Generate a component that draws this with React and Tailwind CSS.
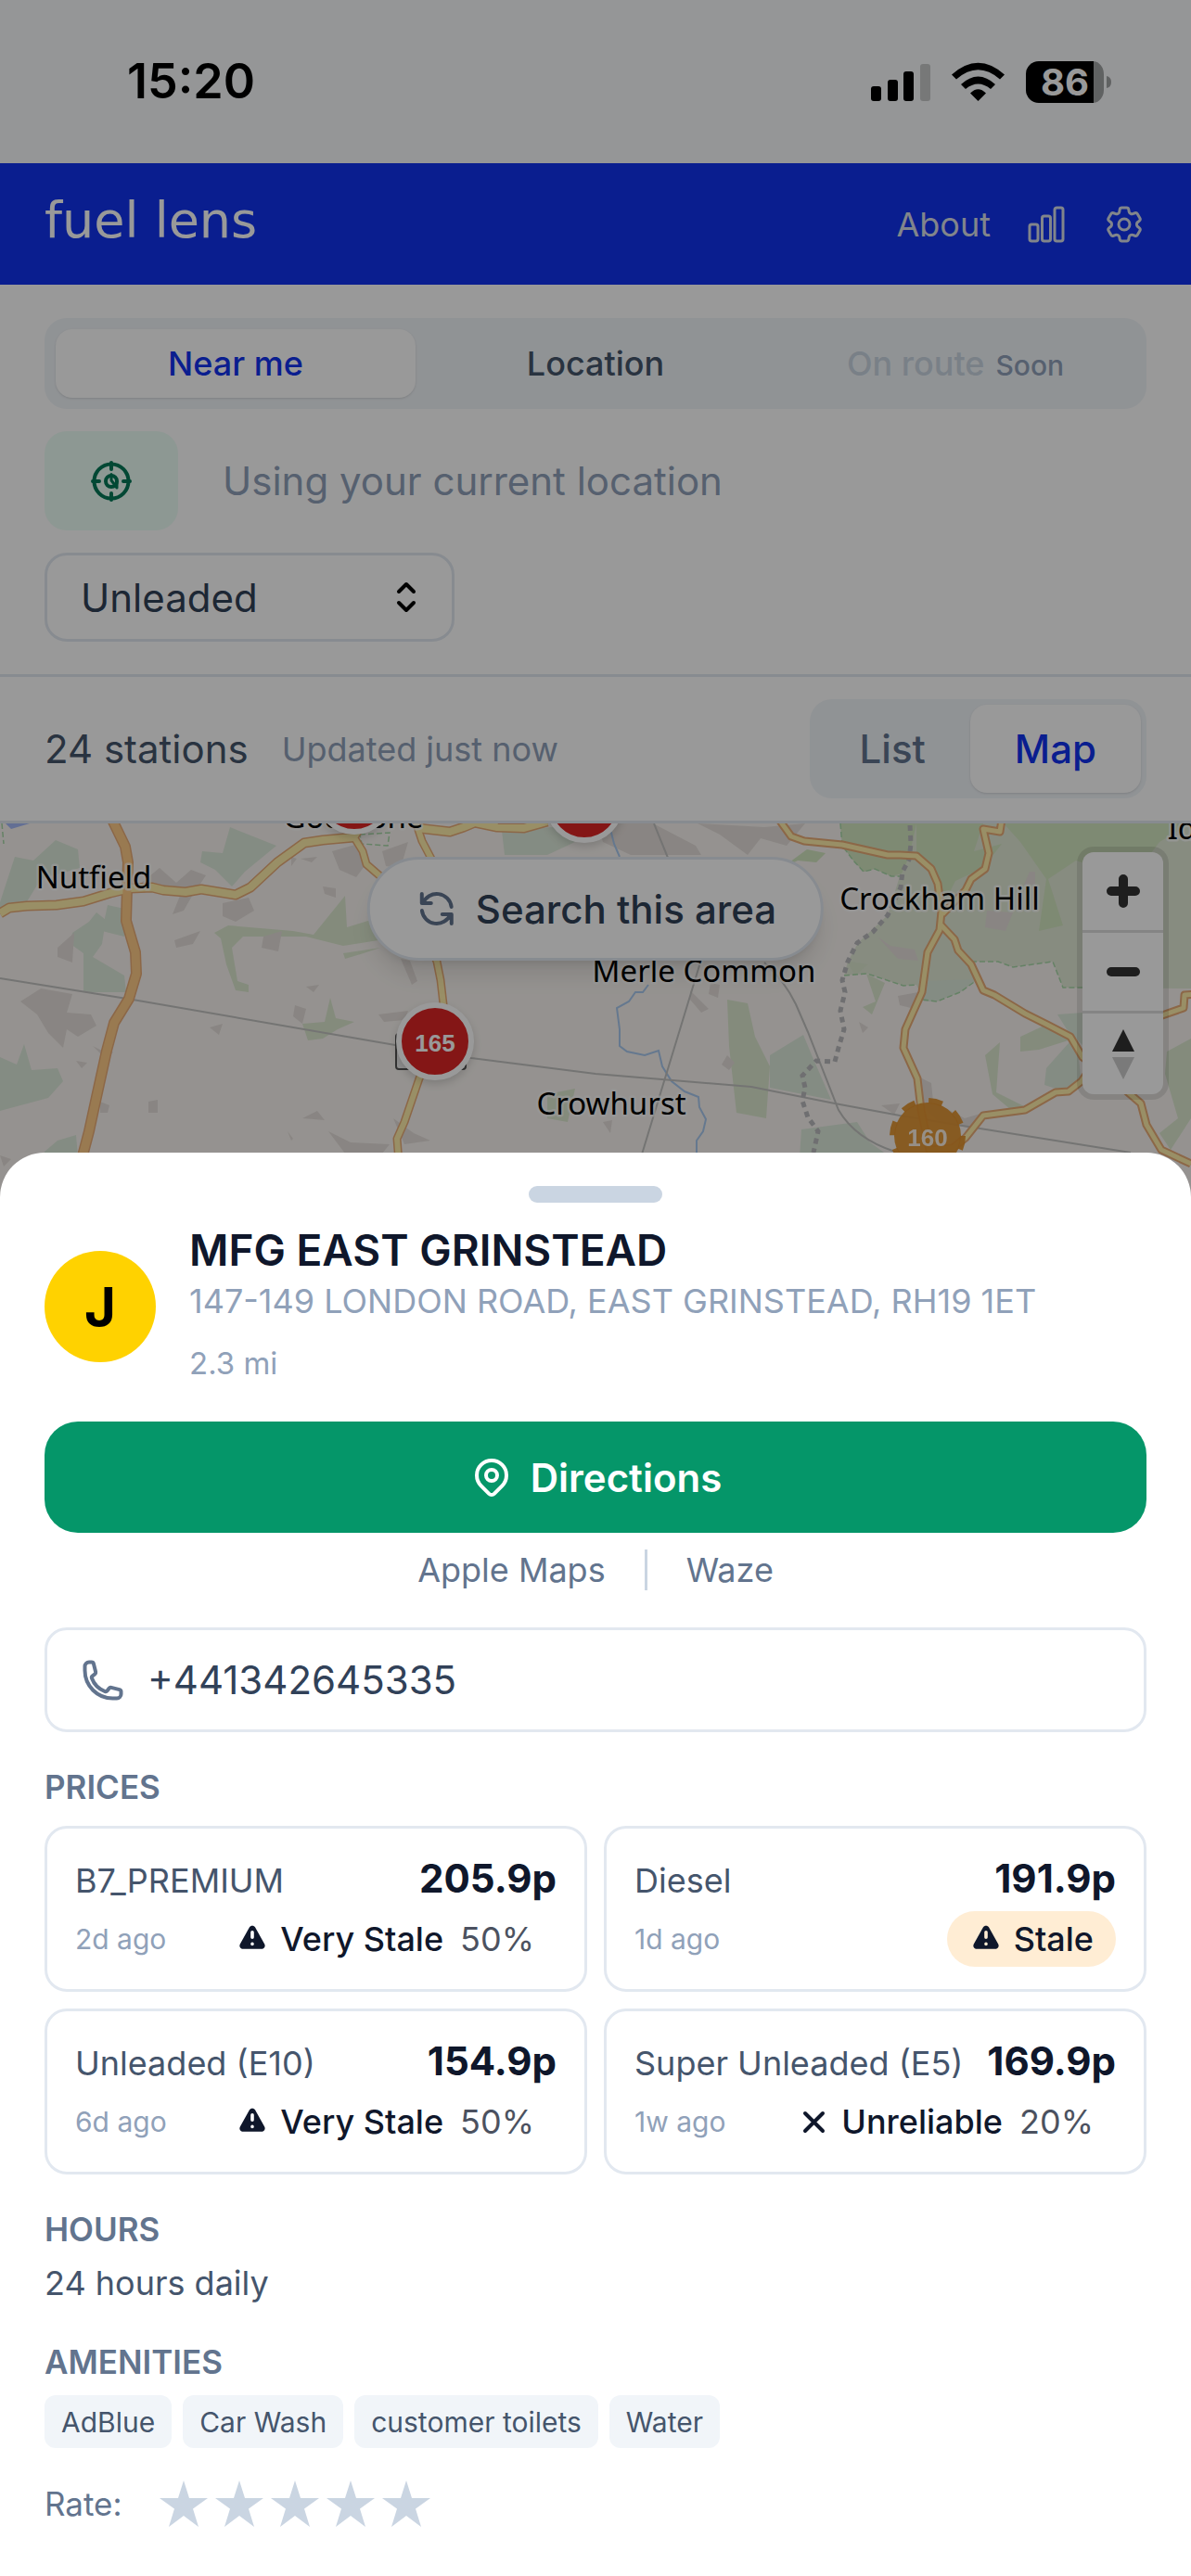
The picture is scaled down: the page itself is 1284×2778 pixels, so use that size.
import React from "react";
import {
  HiOutlineLocationMarker,
  HiOutlineRefresh,
  HiOutlineSelector,
  HiExclamation,
} from "react-icons/hi";
import {
  HiOutlineChartBar,
  HiOutlineCog6Tooth,
  HiOutlinePhone,
} from "react-icons/hi2";

function StatusIcons() {
  return (
    <svg width="260" height="54" viewBox="0 -4 260 54" aria-hidden="true">
      <rect x="0" y="28" width="11" height="16" rx="3" />
      <rect x="18" y="21" width="11" height="23" rx="3" />
      <rect x="35" y="12" width="11" height="32" rx="3" />
      <rect x="53" y="4" width="11" height="40" rx="3" opacity="0.2" />
      <path d="M87 15.5 Q115.500 -10 144 15.500 L139 20.500 Q115.500 0 92 20.500 Z" />
      <path d="M97 26 Q115.500 9 134 26 L129 31 Q115.500 20 102 31 Z" />
      <path d="M107 35.500 Q115.500 27 124 35.500 L115.500 44 Z" />
      <path d="M181 1 H240 V46 H181 A14 14 0 0 1 167 32 V15 A14 14 0 0 1 181 1 Z" />
      <path d="M240 1 A12 14 0 0 1 251 15 V32 A12 14 0 0 1 240 46 Z" opacity="0.35" />
      <path d="M254 17 Q259 18 259 23.500 Q259 29 254 30 Z" opacity="0.35" />
      <text x="209" y="38" textAnchor="middle" fill="#ffffff" className="font-['Inter',sans-serif] text-[40px] font-bold">
        86
      </text>
    </svg>
  );
}

function CrosshairIcon() {
  return (
    <svg width="48" height="48" viewBox="0 0 48 48" fill="none" stroke="#047857" strokeWidth="4" strokeLinecap="round" strokeLinejoin="round" aria-hidden="true">
      <circle cx="24" cy="24" r="18.500" />
      <path d="M24 4 V11 M24 37 V44 M4 24 H11 M37 24 H44" />
      <circle cx="24" cy="24" r="6" />
      <path d="M24 16.500 V23 L30 31 M30 24 V31" strokeWidth="3" />
    </svg>
  );
}

const yellowRoads = [
  "M0 97 L10 91 L29 89 L61 88 L90 84 L119 75 L140 70 L164 69 L176 72 L200 74 L217 71 L254 77 L270 69 L299 42 L328 21 L348 18 L381 15 L388 4",
  "M450 5 L485 9 L500 4 L512 -1 L536 4 L565 5 L590 -2",
];
const minorYellow = [
  "M383 17 L391 30 L395 44 L410 57 L450 100 L471 149 L475 169 L478 195 L469 235 L452 275 L436 322 L428 340 L430 365",
  "M448 -2 L455 19 L465 38",
];
const amberRoads = [
  "M840 -4 L853 14 L867 19 L908 23 L957 34 L970 34 L988 35 L1004 49 L1011 65 L1015 95 L1013 115 L1000 139 L994 182 L976 222 L974 242 L989 275 L993 309 L1002 352 L1027 350 L1041 339 L1060 315 L1105 309 L1138 290 L1152 289 L1166 278 L1182 255",
  "M1013 108 L1029 125 L1033 137 L1047 152 L1060 180 L1072 185 L1105 205 L1129 217 L1154 230 L1167 252 L1215 289 L1230 302 L1236 325 L1252 352 L1284 367",
  "M1080 -4 L1078 9 L1060 6 L1066 32 L1062 49 L1047 60 L1041 72 L1016 98",
  "M1250 208 L1276 199 L1277 185 L1290 184",
];
const trunk =
  "M121 -4 L135 25 L138 42 L137 69 L136 105 L146 139 L147 162 L139 189 L123 215 L115 245 L104 295 L96 332 L86 370";

const labels = [
  ["Nutfield", 101, 70],
  ["Godstone", 381, 5],
  ["Crockham Hill", 1013, 93],
  ["Merle Common", 759, 171],
  ["Crowhurst", 659, 314],
  ["Ide Hill", 1313, 17],
];

function MapDrawing() {
  return (
    <svg className="block h-auto w-full" viewBox="0 0 1284 440" fill="none" aria-hidden="true">
      <g fill="#e1e9d6">
        <path d="M906 0 L908 24 L920 40 L931 52 L943 49 L961 57 L970 57 L957 99 L925 129 L914 149 L910 164 L935 162 L974 175 L988 174 L995 190 L1010 192 L1035 182 L1053 169 L1047 149 L1076 149 L1092 155 L1135 149 L1146 177 L1284 178 L1284 0 Z" />
      </g>
      <g fill="#d3e6c0">
        <path d="M906 0 L908 24 L920 40 L931 52 L943 49 L961 57 L972 54 L980 36 L988 0 Z" />
        <path d="M988 0 H1060 L1050 30 L1080 22 L1060 48 L1030 62 L1016 90 L1006 50 L988 34 Z" />
        <path d="M1082 0 H1284 L1250 20 L1220 60 L1160 40 L1130 60 L1146 110 L1120 116 L1128 60 L1100 20 Z" />
        <path d="M840 50 L870 28 L890 32 L880 42 L860 40 Z" />
      </g>
      <g fill="#dce8cf">
        <path d="M784 190 L806 194 L814 230 L830 262 L826 318 L794 312 L786 240 Z" />
        <path d="M934 162 L954 172 L940 206 L930 198 L944 192 Z" />
        <path d="M912 148 L936 152 L922 164 Z" />
        <path d="M1062 250 L1078 236 L1074 290 L1110 308 L1096 314 L1070 292 Z" />
        <path d="M1100 230 L1130 216 L1158 232 L1120 244 L1100 246 Z" />
        <path d="M1258 246 L1284 232 V318 L1262 352 L1250 334 L1270 318 L1256 270 Z" />
        <path d="M231 118 L246 110 L316 116 L338 120 L372 78 L374 112 L400 104 L408 126 L370 132 L330 122 L262 122 L250 134 L256 170 L268 174 V182 L254 180 L244 152 L238 124 Z" />
        <path d="M370 140 L410 134 L392 140 L372 146 Z" />
        <path d="M326 216 L350 214 L356 188 L362 210 L382 214 L364 222 L348 232 L332 234 Z" />
        <path d="M590 292 L620 286 L612 322 L590 318 Z" />
      </g>
      <g fill="#dde9da">
        <path d="M0 85 L16 36 L36 40 L60 18 L84 28 L86 48 L44 60 L28 86 L0 92 Z" />
        <path d="M218 30 L240 32 L248 4 L298 24 L264 52 L250 68 L232 50 L216 42 Z" />
        <path d="M541 8 L596 4 L620 20 L590 34 H544 Z" />
        <path d="M78 118 L96 106 L104 96 L114 104 L110 130 L100 144 L134 164 L136 182 H90 V140 L76 130 Z" />
        <path d="M116 88 L134 92 L134 122 L110 116 Z" />
        <path d="M0 252 L18 260 L26 238 L34 266 L62 264 L68 278 L52 296 L0 310 Z" />
        <path d="M48 354 L62 342 L82 336 L84 360 H46 Z" />
        <path d="M830 250 L866 228 L876 252 L896 298 L830 285 Z" />
        <path d="M864 330 L924 322 L938 344 L960 360 H862 Z" />
        <path d="M994 170 L1053 168 L1035 182 L1010 192 H996 Z" />
        <path d="M1128 264 L1160 228 L1166 280 L1150 290 L1126 282 Z" />
        <path d="M1140 206 L1168 204 V240 L1150 222 Z" />
      </g>
      <g fill="#e5deda">
        <path d="M22 192 L44 178 L78 184 L72 204 L98 206 L104 218 L84 230 L72 222 L68 242 L52 226 L40 206 Z" />
        <path d="M150 66 L172 48 L190 64 L206 50 L222 56 L206 80 L198 94 L186 98 L194 78 L160 70 Z" />
        <path d="M240 86 L268 80 L274 94 L254 106 L240 100 Z" />
        <path d="M188 126 L216 116 L208 130 L190 134 Z" />
        <path d="M348 68 L362 70 V80 L350 76 Z" />
        <path d="M358 30 L386 22 L396 42 L384 58 L366 50 Z" />
        <path d="M284 122 L304 116 L300 138 L282 134 Z" />
        <path d="M62 134 L80 118 L78 150 L62 144 Z" />
        <path d="M412 30 L440 20 L432 48 L416 46 Z" />
        <path d="M324 38 L342 36 L336 42 Z M314 36 L320 38 L314 46 Z" />
        <path d="M226 220 L240 216 L236 228 Z M160 300 L170 298 V312 H160 Z M326 318 L342 310 L350 320 Z" />
        <path d="M330 176 L344 174 L338 182 Z M318 196 L330 200 L326 216 L316 208 Z" />
        <path d="M354 332 L378 344 L420 346 L412 356 H372 Z M424 318 L446 334 L464 342 L436 346 Z" />
        <path d="M408 206 L440 202 L436 212 L414 214 Z" />
        <path d="M432 146 L442 148 L450 170 L444 174 Z" />
        <path d="M644 0 L704 0 L750 24 L756 34 H680 L650 20 Z" />
        <path d="M752 0 L824 4 L868 0 L848 24 L820 16 L806 34 L776 12 Z" />
        <path d="M744 180 L758 194 L764 200 L756 204 L744 190 Z M766 172 L776 174 L774 188 L764 184 Z" />
        <path d="M784 250 L792 258 L786 266 L778 260 Z M926 214 L936 220 L930 226 Z" />
        <path d="M946 122 L960 132 L986 136 L990 148 L968 146 Z" />
        <path d="M968 186 L990 182 L986 200 L970 196 Z" />
        <path d="M984 270 L1004 280 L1006 300 L1040 318 L1060 312 L1050 330 L1010 320 L990 300 Z" />
        <path d="M1064 94 L1092 96 L1084 116 L1062 112 Z M1110 52 H1116 V66 H1104 Z" />
        <path d="M950 304 L970 302 L964 314 Z M650 322 L660 320 L658 334 Z" />
        <path d="M100 240 L112 246 H122 L116 256 Z M82 256 L94 258 L88 264 Z" />
        <path d="M108 300 L118 304 L116 312 H108 Z M310 332 L316 340 L314 342 Z M0 358 L12 362 L4 370 Z" />
      </g>
      <path d="M6 0 H32 L12 6 Z" fill="#a6b9f7" />
      <g stroke="#a8d8a8" strokeWidth="1.500" strokeDasharray="6 3">
        <path d="M906 0 L908 24 L920 40 L931 52 L943 49 L961 57 L970 57" />
        <path d="M910 164 L935 162 L974 175 L988 174 M995 190 L1010 192 L1035 182 L1053 169 M1047 149 L1076 149 L1092 155 L1135 149 L1146 177 L1170 177" />
        <path d="M388 12 L420 10 L418 24 L390 22 Z M2 0 L4 22" />
      </g>
      <g stroke="#a9c9ee" strokeWidth="2">
        <path d="M658 6 L662 22 L668 36" />
        <path d="M699 174 L693 182 L685 182 L678 192 L665 199 L668 222 L668 240 L676 246 L695 250 L710 245 L714 262 L724 278 L738 289 L753 295 L754 306 L761 319 L758 332 L751 342 L751 360" />
      </g>
      <g stroke="#c2c2c0" strokeWidth="2">
        <path d="M0 167 L143 190 L426 239 L508 253 L642 270 L810 284 L900 302 L970 315 L1219 355" />
        <path d="M705 0 L720 37 M755 150 L691 360" />
        <path d="M824 150 Q846 170 858 195 L871 225 L904 309 Q922 340 965 354" />
      </g>
      <path d="M981 2 L982 22 L980 39 L973 52 L971 69 L957 99 L941 117 L924 129 L914 149 L908 169 L911 182 L906 202 L910 222 L904 242 L900 257 L880 256 L865 272 L868 285 L865 299 L871 317 L882 332 L877 355" stroke="#b9b9bc" strokeWidth="5" strokeDasharray="6 5" />
      <g strokeLinejoin="round">
        <g stroke="#e9ac77">
          {yellowRoads.map((d) => <path key={d} d={d} strokeWidth="11" />)}
          {minorYellow.map((d) => <path key={d} d={d} strokeWidth="9" />)}
          {amberRoads.map((d) => <path key={d} d={d} strokeWidth="9" />)}
          <path d={trunk} strokeWidth="12" />
        </g>
        <g stroke="#ffeeaa">
          {yellowRoads.map((d) => <path key={d} d={d} strokeWidth="8" />)}
          {minorYellow.map((d) => <path key={d} d={d} strokeWidth="6" />)}
          {amberRoads.map((d) => <path key={d} d={d} strokeWidth="5" />)}
        </g>
        <path d={trunk} strokeWidth="9" stroke="#ffcc88" />
      </g>
      <rect x="427" y="227" width="75" height="38" rx="3" fill="#eeeeee" stroke="#555555" strokeWidth="2" />
      <path d="M642 148 V170" stroke="#555555" strokeWidth="2" />
      <g className="font-['Noto_Sans',sans-serif] text-[33px]" fill="#000000" stroke="#ffffff" strokeOpacity="0.700" strokeWidth="5" strokeLinejoin="round" textAnchor="middle" style={{ paintOrder: "stroke" }}>
        {labels.map(([name, x, y]) => (
          <text key={name} x={x} y={y}>{name}</text>
        ))}
      </g>
      <g className="drop-shadow-lg">
        <circle cx="382" cy="-30" r="39" fill="#dc2626" stroke="#ffffff" strokeWidth="6" />
        <circle cx="630" cy="-21" r="39" fill="#dc2626" stroke="#ffffff" strokeWidth="6" />
        <circle cx="469" cy="235" r="39" fill="#dc2626" stroke="#ffffff" strokeWidth="6" />
      </g>
      <circle cx="1000" cy="337" r="36" fill="#e0902c" fillOpacity="0.930" />
      <circle cx="1000" cy="337" r="38" stroke="#e0902c" strokeOpacity="0.930" strokeWidth="6" strokeDasharray="15 15" />
      <g className="font-['Liberation_Sans',sans-serif] text-[26px] font-bold" fill="#ffffff" textAnchor="middle">
        <text x="469" y="246">165</text>
        <text x="1000" y="348" opacity="0.850">160</text>
      </g>
    </svg>
  );
}

function MapControls() {
  return (
    <div className="absolute top-[31px] right-[30px] flex w-[87px] flex-col divide-y-3 divide-[#dddddd] rounded-xl bg-white ring-6 ring-black/10">
      <button type="button" aria-label="Zoom in" className="flex h-[87px] items-center justify-center">
        <svg width="36" height="36" viewBox="0 0 36 36" stroke="#333333" strokeWidth="10" strokeLinecap="round"><path d="M18 5 V31 M5 18 H31" /></svg>
      </button>
      <button type="button" aria-label="Zoom out" className="flex h-[87px] items-center justify-center">
        <svg width="36" height="36" viewBox="0 0 36 36" stroke="#333333" strokeWidth="10" strokeLinecap="round"><path d="M5 18 H31" /></svg>
      </button>
      <button type="button" aria-label="Reset bearing" className="flex h-[87px] items-center justify-center">
        <svg width="24" height="54" viewBox="0 0 24 54"><path d="M12 0 L24 24 H0 Z" fill="#333333" /><path d="M12 54 L24 30 H0 Z" fill="#cccccc" /></svg>
      </button>
    </div>
  );
}

function Background() {
  return (
    <div className="flex min-h-screen flex-col bg-white">
      <div className="flex h-44 items-center justify-between bg-slate-50 pr-[85px] pl-[137px] text-black">
        <span className="text-[52px] font-semibold">15:20</span>
        <StatusIcons />
      </div>
      <header className="flex h-[131px] items-center justify-between bg-[#1133ee] px-12">
        <a href="#home" className="pb-2 font-['DejaVu_Sans',sans-serif] text-[54px] leading-none text-white">fuel lens</a>
        <nav className="flex items-center gap-9 text-[#d8dee8]">
          <a href="#about" className="text-4xl">About</a>
          <a href="#stats" aria-label="Statistics"><HiOutlineChartBar className="size-12" /></a>
          <a href="#settings" aria-label="Settings"><HiOutlineCog6Tooth className="size-12" /></a>
        </nav>
      </header>
      <section className="flex flex-col gap-6 border-b-3 border-slate-200 px-12 pt-9 pb-[35px]">
        <div className="grid grid-cols-3 rounded-3xl bg-slate-100 p-3 text-4xl font-medium">
          <button type="button" className="h-[74px] rounded-[18px] bg-white text-[#1133ee] shadow-sm">Near me</button>
          <button type="button" className="h-[74px] text-slate-600">Location</button>
          <button type="button" disabled className="h-[74px] text-slate-300">
            On route<span className="ml-3 text-3xl text-slate-400">Soon</span>
          </button>
        </div>
        <div className="flex items-center gap-12">
          <button type="button" aria-label="Use my location" className="flex h-[107px] w-36 items-center justify-center rounded-3xl bg-[#ecfdf5]">
            <CrosshairIcon />
          </button>
          <p className="text-[42px] text-slate-400">Using your current location</p>
        </div>
        <div className="relative w-[442px]">
          <select aria-label="Fuel type" defaultValue="Unleaded" className="h-24 w-full appearance-none rounded-3xl border-3 border-slate-200 bg-white px-9 text-[42px] text-slate-700">
            <option>Unleaded</option>
          </select>
          <HiOutlineSelector className="pointer-events-none absolute top-6 right-7 size-12 text-black" />
        </div>
      </section>
      <div className="flex items-center justify-between border-b-3 border-slate-200 px-12 py-6">
        <div className="flex items-center gap-9">
          <h2 className="text-[42px] text-slate-600">24 stations</h2>
          <p className="text-4xl text-slate-400">Updated just now</p>
        </div>
        <div className="flex rounded-3xl bg-slate-100 p-1.5 text-[42px] font-medium">
          <button type="button" className="h-[95px] px-12 text-slate-500">List</button>
          <button type="button" className="h-[95px] rounded-[18px] bg-white px-12 text-[#1133ee] shadow-sm">Map</button>
        </div>
      </div>
      <main className="relative flex-1 overflow-hidden bg-[#f8f4f0]">
        <MapDrawing />
        <button type="button" className="absolute top-9 left-1/2 flex h-28 -translate-x-1/2 items-center gap-[18px] rounded-full border-3 border-slate-200 bg-white px-12 text-[42px] font-medium whitespace-nowrap text-slate-700 shadow-xl">
          <HiOutlineRefresh className="size-12 text-slate-500" />
          Search this area
        </button>
        <MapControls />
      </main>
    </div>
  );
}

const prices = [
  { fuel: "B7_PREMIUM", price: "205.9p", age: "2d ago", status: "Very Stale", score: "50%" },
  { fuel: "Diesel", price: "191.9p", age: "1d ago", status: "Stale" },
  { fuel: "Unleaded (E10)", price: "154.9p", age: "6d ago", status: "Very Stale", score: "50%" },
  { fuel: "Super Unleaded (E5)", price: "169.9p", age: "1w ago", status: "Unreliable", score: "20%" },
];

function PriceCard({ fuel, price, age, status, score }) {
  return (
    <li className="flex flex-col gap-1.5 rounded-3xl border-3 border-slate-200 px-[30px] py-6">
      <div className="flex h-[59px] items-baseline justify-between whitespace-nowrap">
        <span className="text-4xl text-slate-600">{fuel}</span>
        <span className="text-[42px] leading-[59px] font-bold text-slate-900">{price}</span>
      </div>
      <div className="flex h-[60px] items-center justify-between whitespace-nowrap">
        <span className="text-3xl text-slate-400">{age}</span>
        <span className={"flex h-full items-center gap-3 rounded-full px-6 text-4xl font-medium text-slate-900 " + (score ? "" : "bg-orange-100")}>
          {status === "Unreliable" ? (
            <svg width="36" height="36" viewBox="0 0 36 36" stroke="currentColor" strokeWidth="4" strokeLinecap="round" aria-hidden="true"><path d="M9 9 L28 28 M28 9 L9 28" /></svg>
          ) : (
            <HiExclamation className="size-9" />
          )}
          {status}
          {score && <span className="ml-1.5 font-normal opacity-75">{score}</span>}
        </span>
      </div>
    </li>
  );
}

function SectionTitle({ children }) {
  return <h3 className="mt-[35px] text-[35px] leading-12 font-semibold text-slate-500">{children}</h3>;
}

function StationSheet() {
  return (
    <section role="dialog" aria-label="MFG EAST GRINSTEAD" className="fixed inset-x-0 bottom-0 rounded-t-[48px] bg-white px-12 pt-9 pb-12">
      <div className="mx-auto h-[18px] w-36 rounded-full bg-slate-300" />
      <div className="mt-6 flex items-center gap-9">
        <div className="flex size-30 items-center justify-center rounded-full bg-[#ffd200] text-[58px] font-bold text-black">J</div>
        <div>
          <h2 className="text-[46px] leading-[54px] font-semibold text-slate-900">MFG EAST GRINSTEAD</h2>
          <p className="text-4xl leading-[56px] text-slate-400">147-149 LONDON ROAD, EAST GRINSTEAD, RH19 1ET</p>
          <p className="mt-3 text-[33px] leading-[54px] text-slate-400">2.3 mi</p>
        </div>
      </div>
      <a href="#directions" className="mt-9 flex h-30 items-center justify-center gap-[18px] rounded-[36px] bg-[#059669] text-[42px] font-semibold text-white">
        <HiOutlineLocationMarker className="size-12" />
        Directions
      </a>
      <div className="mt-[18px] flex h-11 items-center justify-center gap-[42px] text-4xl text-slate-500">
        <a href="#apple-maps">Apple Maps</a>
        <span className="h-full w-[3px] bg-slate-300" />
        <a href="#waze">Waze</a>
      </div>
      <a href="tel:+441342645335" className="mt-10 flex h-[113px] items-center gap-6 rounded-3xl border-3 border-slate-200 px-9 text-[42px] text-slate-700">
        <HiOutlinePhone className="size-12 text-slate-500" strokeWidth="2" />
        +441342645335
      </a>
      <SectionTitle>PRICES</SectionTitle>
      <ul className="mt-[18px] grid grid-cols-2 gap-[18px]">
        {prices.map((p) => <PriceCard key={p.fuel} {...p} />)}
      </ul>
      <SectionTitle>HOURS</SectionTitle>
      <p className="mt-2 text-4xl leading-[52px] text-slate-600">24 hours daily</p>
      <SectionTitle>AMENITIES</SectionTitle>
      <ul className="mt-3 flex flex-wrap gap-3 text-3xl text-slate-600">
        {["AdBlue", "Car Wash", "customer toilets", "Water"].map((a) => (
          <li key={a} className="flex h-[57px] items-center rounded-xl bg-slate-100 px-[18px]">{a}</li>
        ))}
      </ul>
      <div className="mt-[30px] flex items-center gap-9 text-[35px] text-slate-500">
        <span>Rate:</span>
        <div className="flex">
          {[1, 2, 3, 4, 5].map((n) => (
            <button key={n} type="button" aria-label={"Rate " + n + " stars"} className="flex size-15 items-center justify-center text-slate-300">
              <svg width="52" height="50" viewBox="0 0 52 50" fill="currentColor"><path d="M26 0 L32 19 H52 L36 30.500 L42 50 L26 38 L10 50 L16 30.500 L0 19 H20 Z" /></svg>
            </button>
          ))}
        </div>
      </div>
    </section>
  );
}

export default function App() {
  return (
    <div className="font-['Inter',sans-serif]">
      <Background />
      <div className="fixed inset-0 bg-black/40" />
      <StationSheet />
    </div>
  );
}
